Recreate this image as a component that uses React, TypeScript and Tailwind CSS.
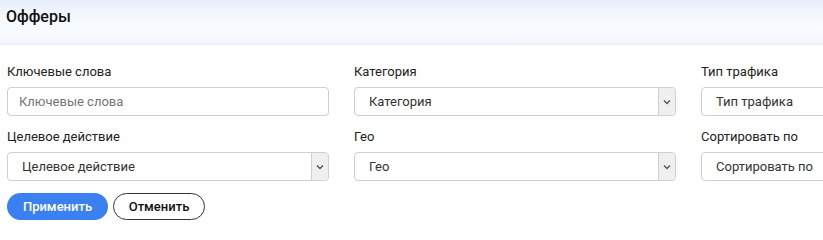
import React from "react";

const font = { fontFamily: "Roboto, 'Noto Sans', sans-serif" };

function Chevron() {
  return (
    <svg width="8" height="6" viewBox="0 0 8 6">
      <path d="M1 1.5 L4 4.5 L7 1.5" fill="none" stroke="#555" strokeWidth="1.4" />
    </svg>
  );
}

function Field({ label, kind }: { label: string; kind: "input" | "select" }) {
  return (
    <div className="flex flex-col w-[322px] shrink-0">
      <div className="text-[13px] leading-[16px] text-[#222] h-[16px] mb-[7px]">{label}</div>
      {kind === "input" ? (
        <div className="h-[29px] border border-[#cfcfcf] rounded-[4px] bg-white flex items-center pl-[11px] text-[13px] text-[#757575]">
          {label}
        </div>
      ) : (
        <div className="h-[29px] border border-[#cfcfcf] rounded-[4px] bg-white flex items-center text-[13px] text-[#333] overflow-hidden">
          <div className="flex-1 pl-[14px]">{label}</div>
          <div className="w-[17px] h-full border-l border-[#cfcfcf] bg-[#efefef] flex items-center justify-center">
            <Chevron />
          </div>
        </div>
      )}
    </div>
  );
}

export default function App() {
  return (
    <div className="w-[823px] h-[240px] bg-white overflow-hidden" style={font}>
      <div className="h-[46px] bg-[linear-gradient(to_bottom,#e7edfb_0%,#f3f7fe_35%,#f8fbff_60%,#f4f7fe_90%,#eef2f9_96%,#f9fbfd_100%)] pl-[6px] pt-[7px]">
        <div className="text-[16px] leading-[20px] font-medium text-[#111]">Офферы</div>
      </div>
      <div className="pl-[7px] pt-[18px]">
        <div className="flex gap-[25px]">
          <Field label="Ключевые слова" kind="input" />
          <Field label="Категория" kind="select" />
          <Field label="Тип трафика" kind="select" />
        </div>
        <div className="flex gap-[25px] mt-[13px]">
          <Field label="Целевое действие" kind="select" />
          <Field label="Гео" kind="select" />
          <Field label="Сортировать по" kind="select" />
        </div>
        <div className="flex gap-[5px] mt-[12px]">
          <button className="h-[27px] w-[101px] rounded-full bg-[#3a80f0] text-white text-[13px] font-medium">
            Применить
          </button>
          <button className="h-[27px] w-[92px] rounded-full border border-[#333] bg-white text-[#111] text-[13px] font-medium">
            Отменить
          </button>
        </div>
      </div>
    </div>
  );
}
